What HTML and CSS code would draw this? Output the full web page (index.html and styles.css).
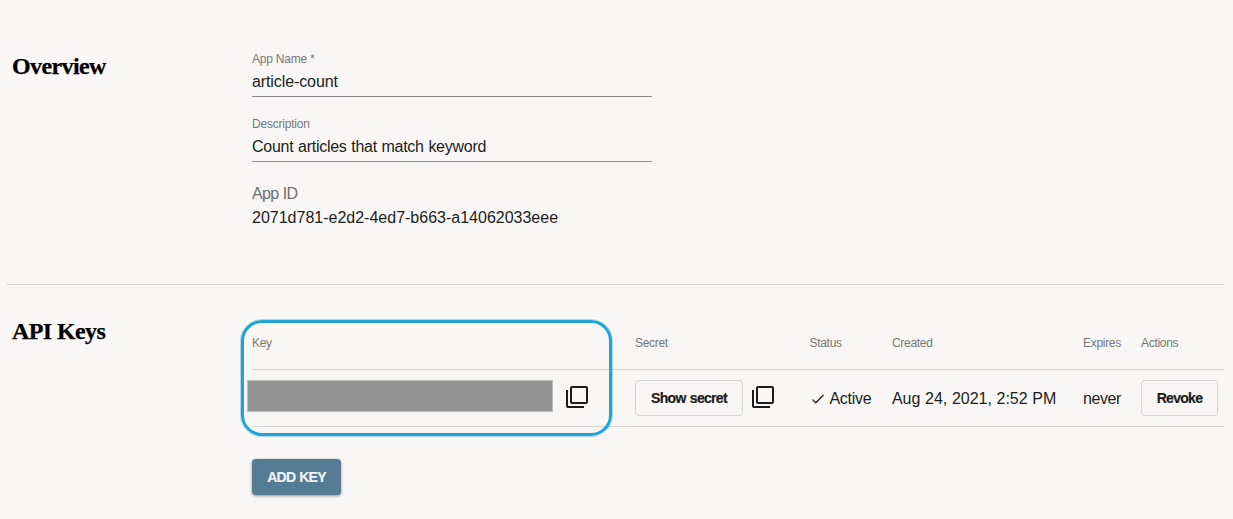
FILE: index.html
```html
<!DOCTYPE html>
<html lang="en">
<head>
<meta charset="utf-8">
<title>article-count</title>
<link rel="stylesheet" href="styles.css">
</head>
<body>
<main class="page">
  <section class="section overview">
    <h2 class="title title-overview">Overview</h2>
    <div class="fields">
      <div class="field">
        <div class="label">App Name *</div>
        <div class="value value-name">article-count</div>
      </div>
      <div class="field">
        <div class="label">Description</div>
        <div class="value">Count articles that match keyword</div>
      </div>
      <div class="app-id">
        <div class="app-id-label">App ID</div>
        <div class="app-id-value">2071d781-e2d2-4ed7-b663-a14062033eee</div>
      </div>
    </div>
  </section>
  <section class="section keys">
    <h2 class="title title-keys">API Keys</h2>
    <div class="keys-body">
      <div class="row head">
        <span>Key</span><span>Secret</span><span>Status</span><span>Created</span><span>Expires</span><span>Actions</span>
      </div>
      <div class="row entry">
        <div class="cell key-cell">
          <div class="redacted"></div>
          <svg class="copy" viewBox="0 0 24 24"><rect x="6" y="2" width="16" height="16" rx="1"/><path d="M2 5v16q0 1 1 1h16"/></svg>
        </div>
        <div class="cell secret-cell">
          <button class="button show">Show secret</button>
          <svg class="copy" viewBox="0 0 24 24"><rect x="6" y="2" width="16" height="16" rx="1"/><path d="M2 5v16q0 1 1 1h16"/></svg>
        </div>
        <div class="cell status">
          <svg class="check" viewBox="0 0 14 12"><path d="M1.5 6.6l3.3 3.2L12.5 2"/></svg>
          <span>Active</span>
        </div>
        <div class="cell created">Aug 24, 2021, 2:52 PM</div>
        <div class="cell never">never</div>
        <div class="cell"><button class="button revoke">Revoke</button></div>
      </div>
      <button class="add">ADD KEY</button>
      <div class="highlight"></div>
    </div>
  </section>
</main>
</body>
</html>
```
FILE: styles.css
```css
* { box-sizing: border-box; }
body {
  margin: 0;
  background: #f8f7f5;
  color: #1d1d1d;
  font: 16px/24px "Liberation Sans", Arial, sans-serif;
}
.page { width: 1224px; padding-left: 7px; }
.section { display: grid; grid-template-columns: 245px 1fr; }
.overview { height: 285px; padding-top: 51px; border-bottom: 1px solid #d6d5d4; }
.title {
  margin: 0;
  padding: 1px 0 0 5px;
  color: #000;
  font: bold 24px/28px "Liberation Serif", "Times New Roman", serif;
  letter-spacing: -0.6px;
  -webkit-text-stroke: 0.25px #000;
}
.title-keys { padding-top: 0; }
.fields { width: 400px; }
.field { height: 46px; margin-bottom: 19px; border-bottom: 1px solid #8e8d8c; }
.label { margin-bottom: 3px; color: #777; font-size: 12px; line-height: 16px; letter-spacing: -0.22px; }
.value { letter-spacing: -0.27px; word-spacing: 0.5px; }
.value-name { letter-spacing: -0.1px; }
.app-id { padding-top: 1px; }
.app-id-label { color: #707070; letter-spacing: -0.7px; word-spacing: 0.7px; }
.keys { padding-top: 32px; }
.keys-body { position: relative; padding-top: 18px; }
.row {
  display: grid;
  grid-template-columns: 383px 174.5px 82.5px 191px 58px 83px;
  border-bottom: 1px solid #d6d5d4;
}
.head { height: 35px; color: #777; font-size: 12px; line-height: 16px; letter-spacing: -0.3px; }
.entry { height: 57px; }
.cell { display: flex; align-items: center; white-space: nowrap; }
.redacted { width: 306px; height: 32px; margin: -4px 12px 0 -5px; border: 1px solid #bcbcbb; background: #929292; }
.copy { flex: none; width: 24px; height: 24px; margin-top: -2px; fill: none; stroke: #1d1d1d; stroke-width: 2; }
.button {
  height: 36px;
  padding: 0;
  border: 1px solid #d6d5d4;
  border-radius: 4px;
  background: transparent;
  color: #1d1d1d;
  font: bold 14px/20px "Liberation Sans", Arial, sans-serif;
  letter-spacing: -0.7px;
  word-spacing: 1px;
  -webkit-text-stroke: 0.2px #1d1d1d;
}
.show { width: 108px; margin-right: 8px; }
.revoke { width: 77px; }
.status, .created, .never { padding-top: 1px; }
.status { letter-spacing: -0.3px; }
.check { width: 14px; height: 12px; margin: 0 5px 0 1px; fill: none; stroke: #1d1d1d; stroke-width: 1.3; }
.created { letter-spacing: -0.05px; word-spacing: 0.4px; }
.never { letter-spacing: -0.4px; }
.add {
  width: 89px;
  height: 36px;
  margin: 32px 0 8px;
  padding: 0;
  border: 0;
  border-radius: 4px;
  background: #567b95;
  box-shadow: 0 1px 3px rgba(0, 0, 0, 0.45);
  color: #eef2f4;
  font: bold 14px/20px "Liberation Sans", Arial, sans-serif;
  letter-spacing: -0.8px;
  word-spacing: 1px;
  -webkit-text-stroke: 0.2px #eef2f4;
}
.highlight {
  position: absolute;
  left: -11px;
  top: 3px;
  width: 371px;
  height: 116px;
  border: 3px solid #22a3d8;
  border-radius: 21px;
  box-shadow: 0 0 0 1px rgba(34, 163, 216, 0.35);
}
```
